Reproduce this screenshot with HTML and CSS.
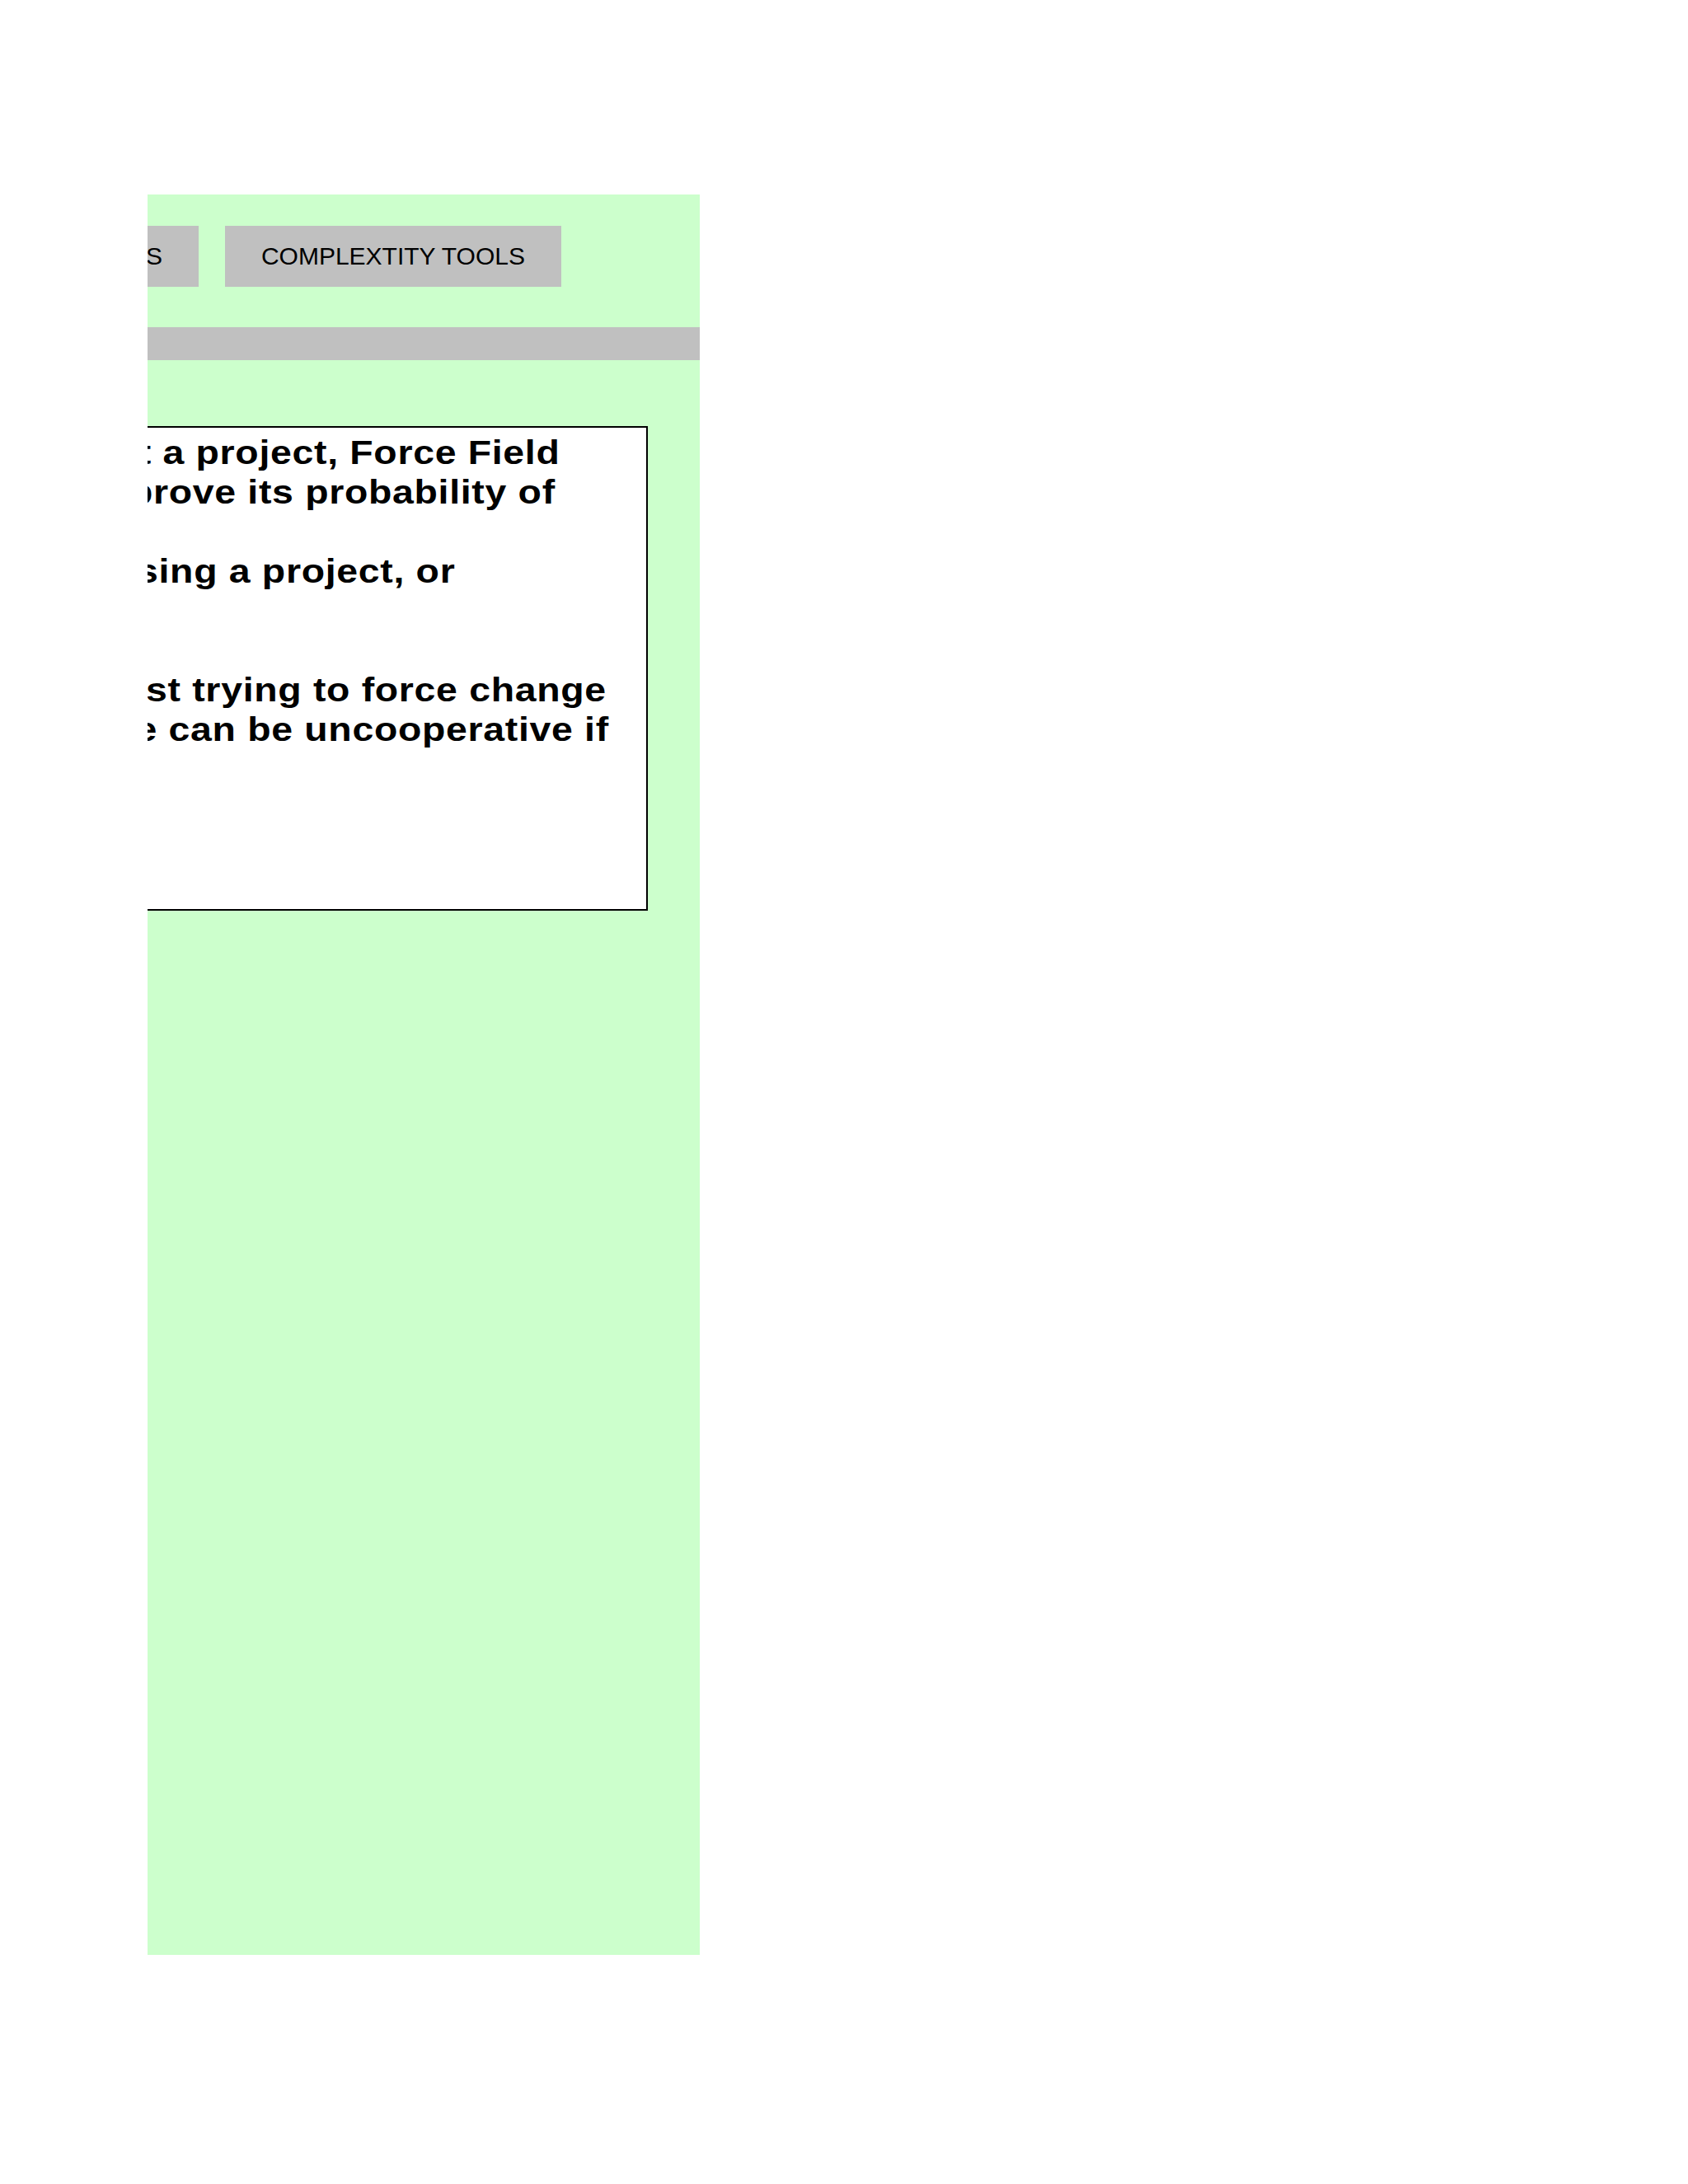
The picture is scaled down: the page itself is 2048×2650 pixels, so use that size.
FILE: index.html
```html
<!DOCTYPE html>
<html lang="en">
<head>
<meta charset="utf-8">
<title>Force Field Analysis</title>
<link rel="stylesheet" href="styles.css">
</head>
<body>
<div class="page">
  <div class="panel">
    <div class="canvas">
      <nav class="tabs">
        <a class="tab">HOME</a>
        <a class="tab">ANALYSIS TOOLS</a>
        <a class="tab">COMPLEXTITY TOOLS</a>
      </nav>
      <div class="bar"></div>
      <div class="card">
        <p>If you want to support a project, Force Field<br>Analysis can help improve its probability of<br>success.<br>If you are really opposing a project, or<br>want it to fail, too.<br><br>It helps firms avoid just trying to force change<br>through. Given people can be uncooperative if<br>they feel forced.</p>
      </div>
    </div>
  </div>
</div>
</body>
</html>
```
FILE: styles.css
```css
body {
  margin: 0;
  background: #ffffff;
}

.page {
  padding: 236px 0 0 179px;
}

.panel {
  width: 670px;
  height: 2136px;
  background: #ccffcc;
  overflow: hidden;
}

.canvas {
  width: 1289px;
  margin-left: -619px;
}

.tabs {
  display: flex;
  justify-content: flex-end;
  gap: 32px;
  padding: 38px 168px 0 0;
}

.tab {
  flex: none;
  display: flex;
  align-items: center;
  height: 74px;
  padding: 0 44px;
  background: #c0c0c0;
  color: #000000;
  font: 30px "Liberation Sans", Arial, Helvetica, sans-serif;
}

.bar {
  height: 40px;
  margin-top: 49px;
  background: #c0c0c0;
}

.card {
  box-sizing: border-box;
  height: 588px;
  margin: 80px 63px 0 68px;
  padding: 6px 48px 6px 54px;
  border: 2px solid #000000;
  background: #ffffff;
}

.card p {
  margin: 0;
  color: #000000;
  font: bold 40px/48px "Liberation Sans", Arial, Helvetica, sans-serif;
  letter-spacing: 0.6px;
  white-space: nowrap;
  transform: scaleX(1.16);
  transform-origin: 0 0;
}
```
